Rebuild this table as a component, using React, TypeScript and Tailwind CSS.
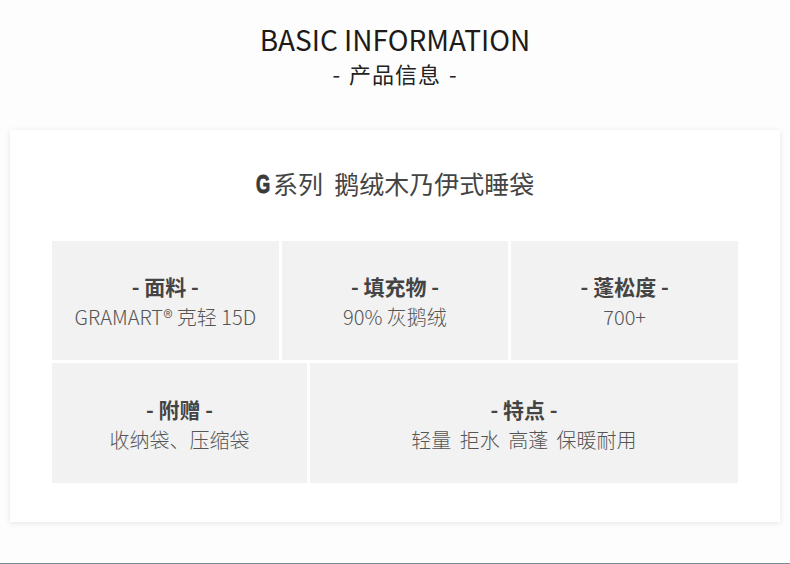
const cjk = "font-['Noto_Sans_CJK_SC','Noto_Sans',sans-serif]";

type Spec = { label: string; value: string };

const row1: Spec[] = [
  { label: "面料", value: "GRAMART® 克轻 15D" },
  { label: "填充物", value: "90% 灰鹅绒" },
  { label: "蓬松度", value: "700+" },
];

function Cell({ label, value, valueClass = "" }: Spec & { valueClass?: string }) {
  return (
    <div className="flex flex-col items-center justify-center bg-[#f2f2f2] pt-[2px]">
      <div className="text-[21px] font-bold leading-[28px] text-[#444]">- {label} -</div>
      <div className={`mt-[3px] text-[20px] font-light leading-[28px] text-[#555] ${valueClass}`}>{value}</div>
    </div>
  );
}

export default function App() {
  return (
    <div className={`flex h-[564px] w-[790px] flex-col bg-[#fdfdfd] ${cjk}`}>
      {/* heading */}
      <div className="flex flex-col items-center pt-[21px]">
        <h1 className="text-[28px] font-normal leading-[36px] text-[#1e1a18]">BASIC INFORMATION</h1>
        <p className="text-[22px] leading-[32px] tracking-[1px] text-[#222] [word-spacing:2px]">- 产品信息 -</p>
      </div>

      {/* card */}
      <div className="mx-[10px] mt-[41px] flex h-[392px] flex-col bg-white px-[42px] shadow-[0_1px_6px_rgba(0,0,0,0.10)]">
        <div className="flex h-[111px] items-center justify-center pb-[3px] text-[25px] text-[#444]">
          <span className="-ml-[3px] scale-x-[0.7] font-['Liberation_Sans',sans-serif] text-[26px] font-bold text-[#3a3a3a] [-webkit-text-stroke:1px_#3a3a3a]">
            G
          </span>
          <span>系列&nbsp;&nbsp;鹅绒木乃伊式睡袋</span>
        </div>

        <div className="flex flex-col gap-[3px]">
          <div className="grid h-[119px] grid-cols-3 gap-[3px]">
            {row1.map((s) => (
              <Cell key={s.label} {...s} />
            ))}
          </div>
          <div className="grid h-[120px] grid-cols-[255px_1fr] gap-[3px]">
            <Cell label="附赠" value="收纳袋、压缩袋" />
            <Cell label="特点" value="轻量 拒水 高蓬 保暖耐用" valueClass="[word-spacing:4px]" />
          </div>
        </div>
      </div>

      <div className="mt-auto h-[1px] bg-[#7a8c9b]" />
    </div>
  );
}
